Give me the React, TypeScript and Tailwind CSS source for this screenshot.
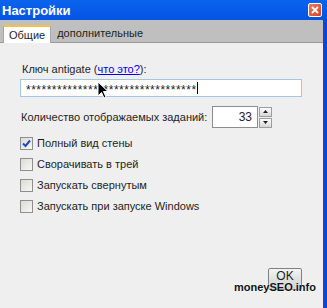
const checks = [
  { label: "Полный вид стены", checked: true },
  { label: "Сворачивать в трей", checked: false },
  { label: "Запускать свернутым", checked: false },
  { label: "Запускать при запуске Windows", checked: false },
];

function CheckBox({ checked }: { checked: boolean }) {
  return (
    <div className="w-[13px] h-[13px] border border-[#8f8f8f] bg-gradient-to-br from-[#dcdcd6] to-[#f7f7f4] flex items-center justify-center">
      {checked && (
        <svg width="9" height="9" viewBox="0 0 9 9">
          <path d="M1 4.5 L3.5 7 L8 1.5" stroke="#2147c6" strokeWidth="2" fill="none" />
        </svg>
      )}
    </div>
  );
}

export default function App() {
  return (
    <div
      className="relative w-[327px] h-[308px] flex flex-col overflow-hidden bg-[#efefef] text-[11px] text-[#1e1e1e]"
      style={{ fontFamily: '"Liberation Sans", Arial, sans-serif' }}
    >
      {/* title bar */}
      <div className="h-[20px] flex items-center justify-between bg-gradient-to-b from-[#0b64ee] to-[#0553e2] pl-[2px] pr-[5px]">
        <span className="text-white font-bold text-[13px] leading-none">Настройки</span>
        <div className="w-[14px] h-[14px] rounded-[2px] border border-white bg-gradient-to-br from-[#ec7a5c] to-[#d8401a] flex items-center justify-center">
          <svg width="8" height="8" viewBox="0 0 8 8">
            <path d="M1 1 L7 7 M7 1 L1 7" stroke="white" strokeWidth="1.8" />
          </svg>
        </div>
      </div>

      <div className="flex-1 flex">
        <div className="flex-1 flex flex-col">
          {/* tabs */}
          <div className="h-[23px] bg-[#bfbfbf] border-b border-[#999] flex items-end pl-[3px]">
            <div className="h-[18px] -mb-px px-[5px] bg-white border-x border-[#a8a8a8] border-t-2 border-t-[#f4c04a] flex items-center">
              Общие
            </div>
            <div className="h-[18px] px-[6px] flex items-center">дополнительные</div>
          </div>

          {/* content */}
          <div className="flex-1 flex flex-col pl-[20px] pr-[21px] pt-[19px]">
            <div className="leading-[14px] pl-[2px]">
              Ключ antigate (<span className="text-[#0000ee] underline">что это?</span>):
            </div>
            <div className="mt-[3px] h-[18px] bg-white border border-[#a9c4e2] flex items-center pl-[5px] text-[12px] tracking-[0.5px]">
              <span className="leading-none pt-[3px]">{"*".repeat(33)}</span>
              <span className="w-px h-[12px] bg-black" />
            </div>

            <div className="mt-[9px] flex items-center">
              <span className="w-[192px] pl-[1px]">Количество отображаемых заданий:</span>
              <div className="w-[46px] h-[22px] bg-white border border-[#8c8c8c] flex items-center justify-end pr-[5px] text-[12px]">
                33
              </div>
              <div className="flex flex-col gap-px ml-px">
                <div className="w-[13px] h-[10px] border border-[#9d9d9d] bg-gradient-to-b from-white to-[#d6d6d6] flex items-center justify-center">
                  <svg width="5" height="3" viewBox="0 0 5 3"><path d="M0 3 L2.5 0 L5 3 Z" fill="#222" /></svg>
                </div>
                <div className="w-[13px] h-[10px] border border-[#9d9d9d] bg-gradient-to-b from-white to-[#d6d6d6] flex items-center justify-center">
                  <svg width="5" height="3" viewBox="0 0 5 3"><path d="M0 0 L2.5 3 L5 0 Z" fill="#222" /></svg>
                </div>
              </div>
            </div>

            <div className="mt-[5px] flex flex-col">
              {checks.map((c) => (
                <div key={c.label} className="h-[21px] flex items-center gap-[4px]">
                  <CheckBox checked={c.checked} />
                  <span>{c.label}</span>
                </div>
              ))}
            </div>

            <div className="mt-auto mb-[18px] flex justify-end">
              <div className="w-[34px] h-[22px] border border-[#808080] rounded-[2px] bg-gradient-to-b from-[#f4f4f4] to-[#cfcfcf] flex items-start justify-center pt-[1px] text-[12px] leading-[12px]">
                OK
              </div>
            </div>
          </div>
        </div>
        <div className="w-[4px] bg-[#0a46d8]" />
      </div>

      {/* watermark */}
      <div className="absolute left-[234px] top-[282px] font-bold text-[11px] text-[#111] leading-none [text-shadow:0_0_2px_white]">
        moneySEO.info
      </div>

      {/* mouse cursor */}
      <svg className="absolute left-[97px] top-[81px]" width="12" height="19" viewBox="0 0 12 19">
        <path d="M1 1 L1 15 L4.5 11.5 L7 17 L9 16 L6.5 10.5 L11 10.5 Z" fill="black" stroke="white" strokeWidth="1" />
      </svg>
    </div>
  );
}
